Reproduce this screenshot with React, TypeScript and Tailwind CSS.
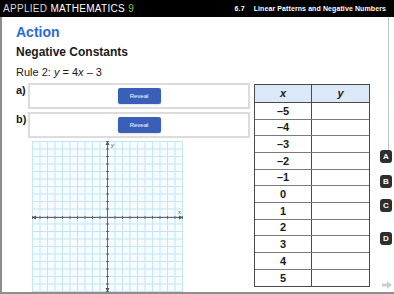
import React from 'react';

const rows = ['–5', '–4', '–3', '–2', '–1', '0', '1', '2', '3', '4', '5'];

function Grid() {
  const s = 7.5;
  const lines = Array.from({ length: 21 }, (_, i) => i * s + 0.5);
  return (
    <svg width="151" height="151" viewBox="0 0 151 151">
      <rect x="0" y="0" width="151" height="151" fill="#f6fcff" />
      {lines.map((p, i) => (
        <g key={i} stroke="#c3e5f7" strokeWidth="1">
          <line x1={p} y1="0" x2={p} y2="151" />
          <line x1="0" y1={p} x2="151" y2={p} />
        </g>
      ))}
      {/* axes */}
      <g stroke="#666" strokeWidth="1">
        <line x1="75.5" y1="2" x2="75.5" y2="149" />
        <line x1="2" y1="76.5" x2="149" y2="76.5" />
        {lines.map((p, i) =>
          i === 10 ? null : (
            <g key={i}>
              <line x1="74" y1={p} x2="77" y2={p} />
              <line x1={p} y1="75" x2={p} y2="78" />
            </g>
          )
        )}
      </g>
      <g fill="#555">
        <polygon points="75.5,0 73.5,4 77.5,4" />
        <polygon points="75.5,151 73.5,147 77.5,147" />
        <polygon points="151,76.5 147,74.5 147,78.5" />
        <polygon points="0,76.5 4,74.5 4,78.5" />
      </g>
      <text x="79" y="6" fontSize="6" fontStyle="italic" fill="#555" fontFamily="Liberation Sans, Arial, sans-serif">
        y
      </text>
      <text x="146" y="73" fontSize="6" fontStyle="italic" fill="#555" fontFamily="Liberation Sans, Arial, sans-serif">
        x
      </text>
    </svg>
  );
}

function RevealBox({ label }: { label: string }) {
  return (
    <div className="flex items-start">
      <div className="w-[12px] pt-[1px] text-[11px] leading-[13px] font-bold text-[#1a1a1a]">{label}</div>
      <div className="w-[222px] h-[26px] border-2 border-[#dcdcdc] flex items-center justify-center">
        <button className="w-[43px] h-[16px] rounded-[2px] bg-[#3a5fb8] text-white text-[6px] leading-[16px] shadow-sm">
          Reveal
        </button>
      </div>
    </div>
  );
}

function Tab({ letter, top }: { letter: string; top: string }) {
  return (
    <div
      className={`absolute right-[2px] ${top} w-[12px] h-[13px] rounded-[3px] bg-[#2e2e2e] text-white text-[8px] leading-[13px] font-bold text-center`}
    >
      {letter}
    </div>
  );
}

export default function App() {
  return (
    <div className="relative w-[394px] h-[294px] overflow-hidden bg-white flex flex-col font-['Liberation_Sans',Arial,sans-serif] text-[#1a1a1a]">
      {/* header bar */}
      <div className="h-[17px] shrink-0 bg-black flex items-center justify-between pl-[3px] pr-[8px]">
        <div className="text-[10px] leading-[12px] tracking-[0.3px] text-[#d8d8d8]">
          APPLIED <span className="text-white">MATHEMATICS</span> <span className="text-[#8cc63f]">9</span>
        </div>
        <div className="flex items-center text-[7px] leading-[10px] font-bold text-white tracking-[0.1px] pt-[1px]">
          <span className="mr-[9px]">6.7</span>
          <span>Linear Patterns and Negative Numbers</span>
        </div>
      </div>

      {/* page */}
      <div className="flex-1 flex border-l-2 border-b-2 border-[#8e8e8e]">
        <div className="w-[386px] pl-[14px] pt-[7px]">
          <div className="text-[14px] leading-[16px] font-bold text-[#2d6ad3]">Action</div>
          <div className="mt-[5px] text-[12px] leading-[14px] font-bold">Negative Constants</div>
          <div className="mt-[7px] text-[11px] leading-[13px]">
            Rule 2: <i>y</i> = 4<i>x</i> – 3
          </div>

          <div className="mt-[4px] flex items-start">
            <div className="w-[234px] flex flex-col gap-[3px]">
              <RevealBox label="a)" />
              <RevealBox label="b)" />
              <div className="ml-[16px]">
                <Grid />
              </div>
            </div>

            <div className="ml-[4px] mt-[1px] w-[116px] border border-[#4a4a4a]">
              <div className="h-[18px] flex bg-[#dbe8f7] border-b border-[#4a4a4a] text-[11px] font-bold italic">
                <div className="w-[57px] border-r border-[#4a4a4a] flex items-center justify-center">x</div>
                <div className="flex-1 flex items-center justify-center">y</div>
              </div>
              {rows.map((r, i) => (
                <div
                  key={r}
                  className={`flex text-[11px] font-bold ${i % 3 === 1 ? 'h-[16px]' : 'h-[17px]'} ${
                    i < rows.length - 1 ? 'border-b border-[#7a7a7a]' : ''
                  }`}
                >
                  <div className="w-[57px] border-r border-[#4a4a4a] flex items-center justify-center">{r}</div>
                  <div className="flex-1" />
                </div>
              ))}
            </div>
          </div>
        </div>

        {/* right rail */}
        <div className="flex-1 flex flex-col">
          <div className="h-[133px] border-l border-[#c4c4c4]" />
        </div>
      </div>

      <Tab letter="A" top="top-[150px]" />
      <Tab letter="B" top="top-[175px]" />
      <Tab letter="C" top="top-[199px]" />
      <Tab letter="D" top="top-[232px]" />

      <svg className="absolute right-[2px] bottom-[5px]" width="10" height="8" viewBox="0 0 10 8">
        <polygon points="0,2.5 5,2.5 5,0 10,4 5,8 5,5.5 0,5.5" fill="#cfcfcf" />
      </svg>
    </div>
  );
}
